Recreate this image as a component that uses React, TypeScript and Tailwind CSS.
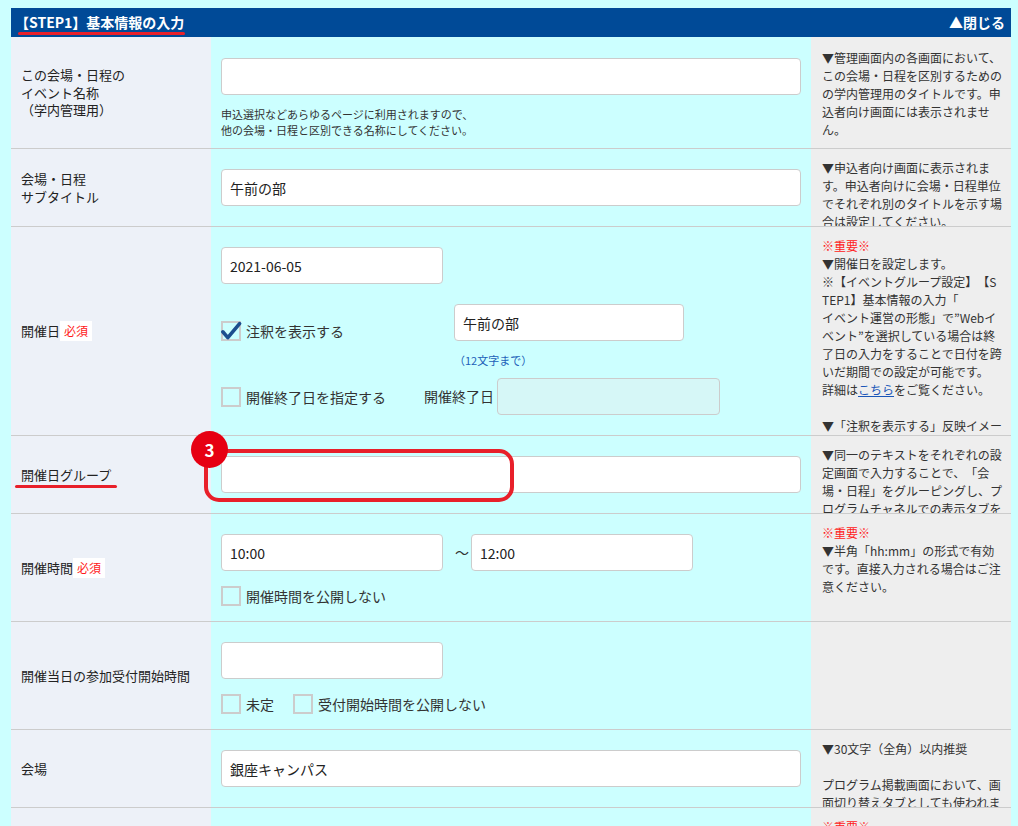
import React from 'react'

type InputProps = { value?: string; className?: string; disabled?: boolean }

const Input = ({ value = '', className = '', disabled = false }: InputProps) => (
    <input
        defaultValue={value}
        disabled={disabled}
        className={`h-[37px] rounded-[4px] border border-[#cccccc] px-2 text-[14px] text-[#222222] outline-none ${disabled ? 'bg-[#d6f7f7]' : 'bg-white'} ${className}`}
    />
)

const Check = ({ label, checked = false }: { label: string; checked?: boolean }) => (
    <div className="flex items-center h-5">
        <span className="relative w-5 h-5 border-2 border-[#cccccc] shrink-0">
            {checked && (
                <svg className="absolute -left-[2px] -top-[2px] overflow-visible" width="20" height="20" viewBox="0 0 20 20" fill="none">
                    <path d="M1.8 10.8L6.8 16.6L18.6 2.6" stroke="#1c4e8e" strokeWidth="3.6" strokeLinecap="round" strokeLinejoin="round" />
                </svg>
            )}
        </span>
        <span className="ml-[5px] text-[14px] leading-5 text-[#333333]">{label}</span>
    </div>
)

const Badge = () => (
    <span className="bg-white text-[#ff1a1a] text-[12px] leading-5 h-5 px-[4px]">必須</span>
)

const Red = ({ children }: { children: React.ReactNode }) => <div className="text-[#ff2020]">{children}</div>

const Note = ({ lines }: { lines: React.ReactNode[] }) => (
    <>
        {lines.map((l, i) =>
            l === '' ? <div key={i} className="h-[18px]" /> : <div key={i} className="whitespace-nowrap">{l}</div>
        )}
    </>
)

type RowProps = {
    label: React.ReactNode
    note?: React.ReactNode
    mid: string
    notePad?: string
    children: React.ReactNode
}

const Row = ({ label, note, mid, notePad = 'pt-[10px]', children }: RowProps) => (
    <div className="flex border-b border-[#cccccc]">
        <div className="w-[200px] shrink-0 bg-[#edf1f8] flex items-center pl-[10px] text-[13px] leading-[17.5px] text-[#222222]">
            {label}
        </div>
        <div className={`w-[600px] shrink-0 bg-[#ccffff] px-[10px] ${mid}`}>{children}</div>
        <div className={`w-[200px] shrink-0 bg-[#eeeeee] [contain:size] overflow-hidden pl-[11px] text-[12px] leading-[18px] text-[#333333] ${notePad}`}>
            {note}
        </div>
    </div>
)

export default function App() {
    return (
        <div className="h-screen overflow-hidden bg-[#ccffff] pt-2 pl-[11px] font-['Noto_Sans_CJK_JP',sans-serif] [text-spacing-trim:space-all]">
            <div className="w-[1000px]">
                {/* header */}
                <div className="relative h-[29px] bg-[#004a97] flex items-center justify-between pl-[4px] pr-[6px] text-white font-bold text-[14px]">
                    <span>【STEP1】基本情報の入力</span>
                    <span>▲閉じる</span>
                    <span className="absolute left-[7px] top-[24px] w-[167px] h-[3px] rounded-full bg-[#e8202a]" />
                </div>

                <Row
                    mid="pt-[21px] pb-[10px]"
                    notePad="pt-[12px]"
                    label={<div>この会場・日程の<br />イベント名称<br />（学内管理用）</div>}
                    note={<Note lines={[
                        '▼管理画面内の各画面において、',
                        'この会場・日程を区別するための',
                        'の学内管理用のタイトルです。申',
                        '込者向け画面には表示されませ',
                        'ん。',
                    ]} />}
                >
                    <Input className="w-full" />
                    <div className="mt-[11px] text-[11px] leading-4 text-[#333333]">
                        申込選択などあらゆるページに利用されますので、<br />
                        他の会場・日程と区別できる名称にしてください。
                    </div>
                </Row>

                <Row
                    mid="py-5"
                    label={<div>会場・日程<br />サブタイトル</div>}
                    note={<Note lines={[
                        '▼申込者向け画面に表示されま',
                        'す。申込者向けに会場・日程単位',
                        'でそれぞれ別のタイトルを示す場',
                        '合は設定してください。',
                    ]} />}
                >
                    <Input className="w-full" value="午前の部" />
                </Row>

                <Row
                    mid="py-5"
                    label={<div className="flex items-center">開催日<Badge /></div>}
                    note={<>
                        <Red>※重要※</Red>
                        <Note lines={[
                            '▼開催日を設定します。',
                            '※【イベントグループ設定】【S',
                            'TEP1】基本情報の入力「',
                            'イベント運営の形態」で”Webイ',
                            'ベント”を選択している場合は終',
                            '了日の入力をすることで日付を跨',
                            'いだ期間での設定が可能です。',
                            <>詳細は<span className="text-[#1a56b8] underline">こちら</span>をご覧ください。</>,
                            '',
                            '▼「注釈を表示する」反映イメー',
                            'ジ',
                        ]} />
                    </>}
                >
                    <Input className="w-[222px]" value="2021-06-05" />
                    <div className="flex items-end mt-5">
                        <div className="w-[233px]"><Check label="注釈を表示する" checked /></div>
                        <Input className="w-[230px]" value="午前の部" />
                    </div>
                    <div className="ml-[233px] mt-[11px] text-[11px] leading-4 text-[#2060b8]">（12文字まで）</div>
                    <div className="flex items-center mt-[10px]">
                        <div className="w-[203px]"><Check label="開催終了日を指定する" /></div>
                        <span className="text-[14px] text-[#333333] mr-[3px]">開催終了日</span>
                        <Input className="w-[223px]" disabled />
                    </div>
                </Row>

                <Row
                    mid="py-5 relative"
                    label={
                        <span className="relative">
                            開催日グループ
                            <span className="absolute -left-[6px] -right-[6px] top-[19px] h-[3px] rounded-full bg-[#e8202a]" />
                        </span>
                    }
                    note={<Note lines={[
                        '▼同一のテキストをそれぞれの設',
                        '定画面で入力することで、「会',
                        '場・日程」をグルーピングし、プ',
                        'ログラムチャネルでの表示タブを',
                        '切り替えることができます。',
                    ]} />}
                >
                    <Input className="w-full" />
                    <div className="absolute -left-[7px] top-[13px] w-[310px] h-[53px] border-4 border-[#e8202a] rounded-[15px]" />
                    <div className="absolute -left-[20px] -top-[5px] w-[37px] h-[37px] rounded-full bg-[#e60012] text-white font-bold text-[17px] flex items-center justify-center z-10">
                        3
                    </div>
                </Row>

                <Row
                    mid="pt-5 pb-[15px]"
                    label={<div className="flex items-center">開催時間<Badge /></div>}
                    note={<>
                        <Red>※重要※</Red>
                        <Note lines={[
                            '▼半角「hh:mm」の形式で有効',
                            'です。直接入力される場合はご注',
                            '意ください。',
                        ]} />
                    </>}
                >
                    <div className="flex items-center">
                        <Input className="w-[222px]" value="10:00" />
                        <span className="w-[28px] pl-[12px] text-[14px] text-[#333333]">～</span>
                        <Input className="w-[222px]" value="12:00" />
                    </div>
                    <div className="mt-[15px]"><Check label="開催時間を公開しない" /></div>
                </Row>

                <Row mid="pt-5 pb-[15px]" label="開催当日の参加受付開始時間">
                    <Input className="w-[222px]" />
                    <div className="mt-[15px] flex gap-[19px]">
                        <Check label="未定" />
                        <Check label="受付開始時間を公開しない" />
                    </div>
                </Row>

                <Row
                    mid="py-5"
                    label="会場"
                    note={<Note lines={[
                        '▼30文字（全角）以内推奨',
                        '',
                        'プログラム掲載画面において、画',
                        '面切り替えタブとしても使われま',
                        'す。',
                    ]} />}
                >
                    <Input className="w-full" value="銀座キャンパス" />
                </Row>

                <Row
                    mid="py-5"
                    label="会場住所"
                    note={<>
                        <Red>※重要※</Red>
                        <div>▼会場の住所を入力してください。</div>
                    </>}
                >
                    <Input className="w-full" />
                    <div className="h-[40px]" />
                </Row>
            </div>
        </div>
    )
}
